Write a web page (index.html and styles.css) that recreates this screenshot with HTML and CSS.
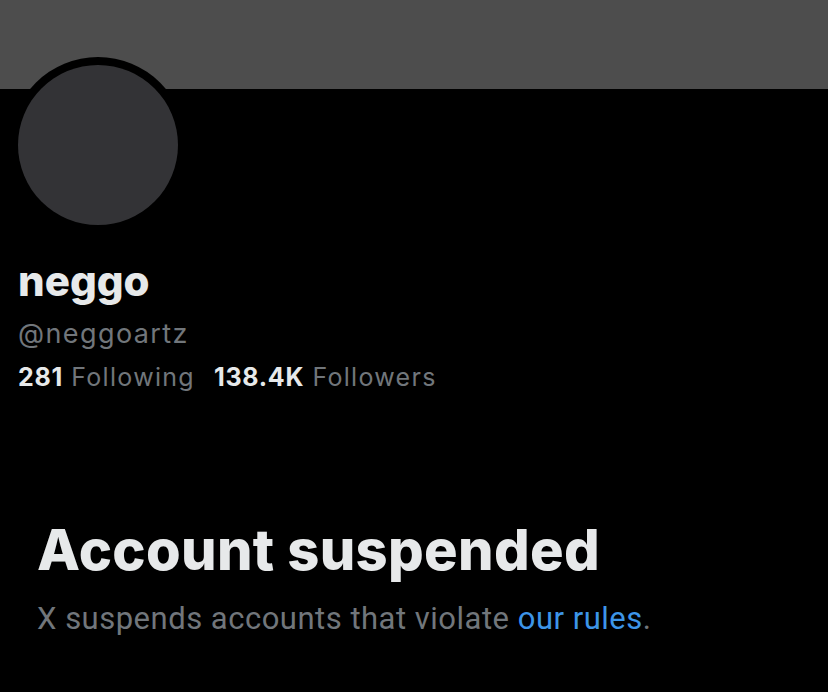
FILE: index.html
```html
<!DOCTYPE html>
<html>
<head>
<meta charset="utf-8">
<link rel="stylesheet" href="styles.css">
</head>
<body>
<div class="page">
  <div class="banner"></div>
  <div class="profile">
    <div class="avatar-ring"><div class="avatar"></div></div>
    <div class="name">neggo</div>
    <div class="handle">@neggoartz</div>
    <div class="stats">
      <span class="stat"><b>281</b> Following</span>
      <span class="stat"><b>138.4K</b> Followers</span>
    </div>
  </div>
  <div class="suspended">
    <h1 class="title">Account suspended</h1>
    <p class="desc">X suspends accounts that violate <a class="link" href="#">our rules</a>.</p>
  </div>
</div>
</body>
</html>
```
FILE: styles.css
```css
html, body {
  margin: 0;
  padding: 0;
  background: #000;
}
.page {
  width: 828px;
  height: 692px;
  overflow: hidden;
  background: #000;
  font-family: "Inter", "Roboto", sans-serif;
  color: #e7e9ea;
}
.banner {
  height: 89px;
  background: #4d4d4d;
}
.profile {
  padding: 0 18px;
}
.avatar-ring {
  width: 176px;
  height: 176px;
  border-radius: 50%;
  background: #000;
  margin-top: -32px;
  margin-left: -8px;
  display: flex;
  align-items: center;
  justify-content: center;
}
.avatar {
  width: 160px;
  height: 160px;
  border-radius: 50%;
  background: #333336;
}
.name {
  margin-top: 24px;
  font-size: 42px;
  font-weight: 800;
  line-height: 48px;
}
.handle {
  margin-top: 11px;
  font-size: 27px;
  line-height: 36px;
  letter-spacing: 1.4px;
  color: #71767b;
}
.stats {
  margin-top: 7px;
  display: flex;
  gap: 19px;
  font-size: 25px;
  line-height: 36px;
  letter-spacing: 1.3px;
  color: #71767b;
}
.stat b {
  color: #e7e9ea;
  font-weight: 700;
  letter-spacing: 0.7px;
}
.suspended {
  padding: 0 37px;
  margin-top: 123px;
}
.title {
  margin: 0;
  font-size: 56px;
  font-weight: 800;
  line-height: 64px;
  letter-spacing: 0.35px;
}
.desc {
  margin: 17px 0 0;
  font-family: "Roboto", sans-serif;
  font-size: 31px;
  line-height: 40px;
  letter-spacing: 0.5px;
  color: #71767b;
}
.link {
  color: #3d95e8;
  text-decoration: none;
}
```
